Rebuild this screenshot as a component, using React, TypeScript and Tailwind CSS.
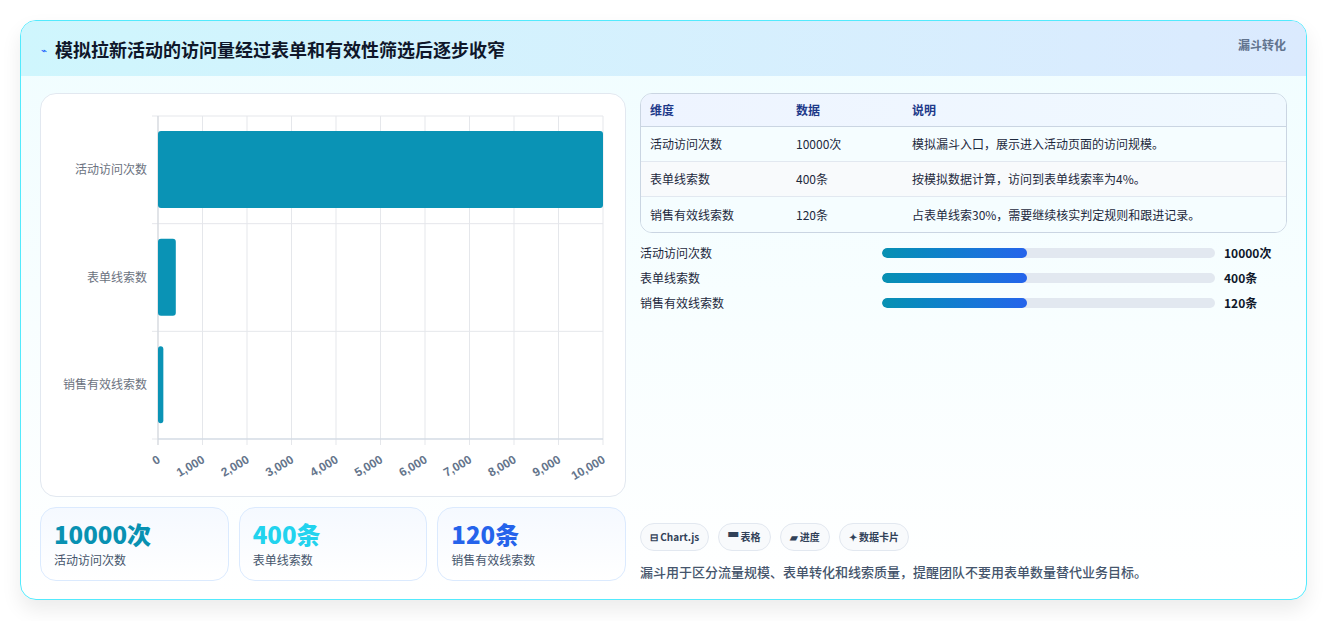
const font = { fontFamily: '"Noto Sans CJK SC", "Noto Sans", sans-serif' };

const rows = [
  { name: "活动访问次数", value: "10000次", note: "模拟漏斗入口，展示进入活动页面的访问规模。" },
  { name: "表单线索数", value: "400条", note: "按模拟数据计算，访问到表单线索率为4%。" },
  { name: "销售有效线索数", value: "120条", note: "占表单线索30%，需要继续核实判定规则和跟进记录。" },
];

function Chart() {
  const x0 = 117, x1 = 562, y0 = 22, y1 = 345;
  const w = x1 - x0;
  const band = (y1 - y0) / 3;
  const vals = [10000, 400, 120];
  return (
    <svg width="586" height="404" style={font}>
      {Array.from({ length: 11 }, (_, i) => {
        const x = x0 + (w * i) / 10;
        return <line key={i} x1={x} x2={x} y1={y0} y2={y1 + 6} stroke="#e5e7eb" />;
      })}
      {[0, 1, 2, 3].map((i) => (
        <line key={i} x1={x0 - 6} x2={x1} y1={y0 + band * i} y2={y0 + band * i} stroke="#e5e7eb" />
      ))}
      <line x1={x0} x2={x0} y1={y0} y2={y1 + 6} stroke="#d1d5db" />
      <line x1={x0} x2={x1} y1={y1} y2={y1} stroke="#cbd5e1" />
      {vals.map((v, i) => (
        <rect key={i} x={x0} y={y0 + band * i + 15} width={Math.max(4, (w * v) / 10000)} height={77} rx={3} fill="#0a93b5" />
      ))}
      {rows.map((r, i) => (
        <text key={i} x={106} y={y0 + band * i + band / 2 + 4} textAnchor="end" fontSize="12" fill="#6b7280">
          {r.name}
        </text>
      ))}
      {Array.from({ length: 11 }, (_, i) => {
        const x = x0 + (w * i) / 10;
        const label = (i * 1000).toLocaleString("en-US");
        return (
          <text key={i} x={x + 3} y={368} transform={`rotate(-30 ${x + 3} 368)`} textAnchor="end" fontSize="12" fontWeight="700" fill="#64748b" style={{ fontFamily: '"Liberation Sans", sans-serif' }}>
            {label}
          </text>
        );
      })}
    </svg>
  );
}

export default function App() {
  return (
    <div className="min-h-[621px] bg-white px-5 pt-5" style={font}>
      <div className="w-[1287px] h-[580px] rounded-2xl border border-cyan-300 bg-gradient-to-b from-[#f0fdff] to-white shadow-[0_10px_20px_rgba(0,0,0,0.08)] overflow-hidden flex flex-col">
        <div className="h-[55px] shrink-0 flex items-start justify-between pl-5 pr-5 bg-gradient-to-r from-[#cff6fd] to-[#dbeafe]">
          <div className="flex items-center gap-2 mt-[15px]">
            <span className="text-[10px] text-blue-600">⌁</span>
            <span className="text-[18px] font-bold text-[#0f172a]">模拟拉新活动的访问量经过表单和有效性筛选后逐步收窄</span>
          </div>
          <span className="mt-[15px] text-[12px] font-bold text-slate-500">漏斗转化</span>
        </div>
        <div className="flex gap-[14px] px-[19px] pt-[17px]">
          <div className="w-[586px] flex flex-col gap-[10px]">
            <div className="h-[404px] rounded-2xl border border-slate-200 bg-white">
              <Chart />
            </div>
            <div className="grid grid-cols-3 gap-[10px]">
              {[
                { v: "10000次", l: "活动访问次数", c: "text-[#0891b2]" },
                { v: "400条", l: "表单线索数", c: "text-[#22d3ee]" },
                { v: "120条", l: "销售有效线索数", c: "text-[#2563eb]" },
              ].map((s) => (
                <div key={s.l} className="h-[74px] rounded-2xl border border-blue-100 bg-gradient-to-b from-[#f5f9ff] to-white px-[13px] pt-[10px]">
                  <div className={`text-[24px] leading-[32px] font-extrabold ${s.c}`}>{s.v}</div>
                  <div className="text-[12px] text-slate-600 mt-[1px]">{s.l}</div>
                </div>
              ))}
            </div>
          </div>
          <div className="w-[648px] flex flex-col">
            <div className="rounded-xl border border-slate-300 overflow-hidden text-[12px]">
              <div className="flex h-[33px] items-center bg-gradient-to-r from-[#eef4ff] to-[#f0f9ff] font-bold text-[#1e3a8a] border-b border-slate-300">
                <div className="w-[155px] pl-[9px]">维度</div>
                <div className="w-[116px]">数据</div>
                <div>说明</div>
              </div>
              {rows.map((r, i) => (
                <div key={r.name} className={`flex h-[35px] items-center text-slate-800 ${i < 2 ? "border-b border-slate-200" : ""} ${i === 1 ? "bg-[#f8fafc]" : "bg-[#f5fdff]"}`}>
                  <div className="w-[155px] pl-[9px]">{r.name}</div>
                  <div className="w-[116px]">{r.value}</div>
                  <div>{r.note}</div>
                </div>
              ))}
            </div>
            <div className="flex flex-col gap-[10px] mt-[12px] text-[12px] text-slate-800">
              {rows.map((r) => (
                <div key={r.name} className="flex items-center h-[15px]">
                  <div className="w-[242px]">{r.name}</div>
                  <div className="w-[333px] h-[10px] rounded-full bg-[#e2e8f0] overflow-hidden">
                    <div className="h-full w-[145px] rounded-full bg-gradient-to-r from-[#0891b2] to-[#2563eb]" />
                  </div>
                  <div className="ml-[9px] font-bold text-[#0f172a]">{r.value}</div>
                </div>
              ))}
            </div>
            <div className="mt-auto flex gap-[9px] text-[10px] font-semibold text-slate-700">
              <span className="h-[28px] px-[9px] flex items-center gap-1 rounded-full border border-slate-200 bg-[#f8fafc]">⊟ Chart.js</span>
              <span className="h-[28px] px-[9px] flex items-center gap-1 rounded-full border border-slate-200 bg-[#f8fafc]">▀ 表格</span>
              <span className="h-[28px] px-[9px] flex items-center gap-1 rounded-full border border-slate-200 bg-[#f8fafc]">▰ 进度</span>
              <span className="h-[28px] px-[9px] flex items-center gap-1 rounded-full border border-slate-200 bg-[#f8fafc]">✦ 数据卡片</span>
            </div>
            <div className="mt-[11px] text-[13px] text-slate-600 font-medium">漏斗用于区分流量规模、表单转化和线索质量，提醒团队不要用表单数量替代业务目标。</div>
          </div>
        </div>
      </div>
    </div>
  );
}
